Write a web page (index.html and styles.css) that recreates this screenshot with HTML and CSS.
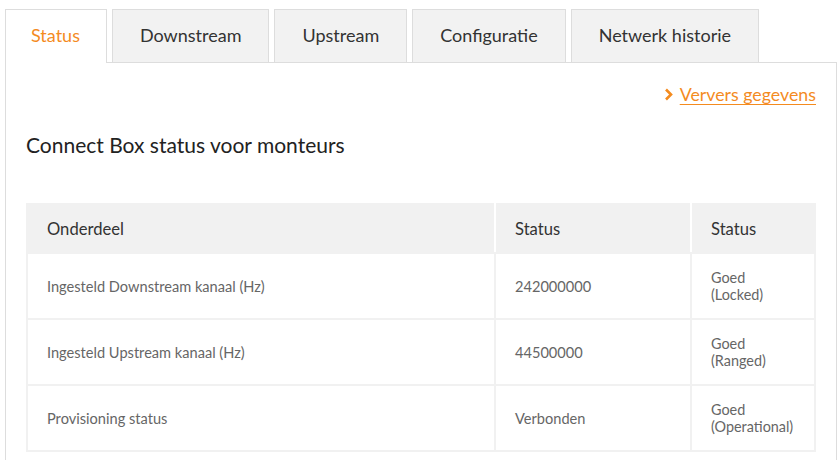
FILE: index.html
```html
<!DOCTYPE html>
<html lang="nl">
<head>
<meta charset="utf-8">
<title>Connect Box status</title>
<link rel="stylesheet" href="styles.css">
</head>
<body>
<div class="page">
  <nav class="tabs">
    <a class="tab active">Status</a>
    <a class="tab">Downstream</a>
    <a class="tab">Upstream</a>
    <a class="tab">Configuratie</a>
    <a class="tab">Netwerk historie</a>
  </nav>
  <section class="panel">
    <div class="refresh-row">
      <a class="refresh">
        <svg class="chev" width="9" height="13" viewBox="0 0 9 13"><polyline points="2,1.5 7,6.5 2,11.5" fill="none" stroke="#f48b1f" stroke-width="2.6"/></svg>
        <span class="refresh-text">Ververs gegevens</span>
      </a>
    </div>
    <h2 class="title">Connect Box status voor monteurs</h2>
    <table class="status-table">
      <thead>
        <tr><th class="c1">Onderdeel</th><th class="c2">Status</th><th class="c3">Status</th></tr>
      </thead>
      <tbody>
        <tr><td>Ingesteld Downstream kanaal (Hz)</td><td>242000000</td><td class="state"><span>Goed</span><span>(Locked)</span></td></tr>
        <tr><td>Ingesteld Upstream kanaal (Hz)</td><td>44500000</td><td class="state"><span>Goed</span><span>(Ranged)</span></td></tr>
        <tr><td>Provisioning status</td><td>Verbonden</td><td class="state"><span>Goed</span><span>(Operational)</span></td></tr>
      </tbody>
    </table>
  </section>
</div>
</body>
</html>
```
FILE: styles.css
```css
html, body { margin: 0; padding: 0; background: #fff; }
body { font-family: Lato, "Open Sans", sans-serif; color: #333; }
.page { padding: 9px 0 0 5px; }
.tabs { display: flex; gap: 5px; height: 53px; }
.tab {
  box-sizing: border-box;
  height: 53px;
  padding: 0 27px 3px;
  display: flex;
  align-items: center;
  background: #f2f2f2;
  border: 1px solid #dddddd;
  border-bottom: none;
  font-size: 18px;
  color: #333;
  cursor: pointer;
}
.tab.active {
  background: #fff;
  color: #f48b1f;
  height: 54px;
  padding: 0 26px 4px 25px;
  margin-bottom: -1px;
  position: relative;
  z-index: 1;
}
.panel {
  border: 1px solid #dddddd;
  border-bottom: none;
  padding: 0 20px;
  box-sizing: border-box;
  width: 832px;
  height: 400px;
}
.refresh-row { display: flex; justify-content: flex-end; padding-top: 20px; }
.refresh { display: flex; align-items: center; gap: 7px; color: #f48b1f; font-size: 17.8px; cursor: pointer; }
.chev { margin-left: -2px; }
.refresh-text { text-decoration: underline; text-underline-offset: 3px; }
.title { margin: 28px 0 0 0; font-size: 21px; font-weight: normal; color: #222; line-height: 24px; }
.status-table {
  margin-top: 46px;
  width: 790px;
  border-collapse: collapse;
  font-size: 14.6px;
}
.status-table th, .status-table td {
  border: 2px solid #f1f1f1;
  text-align: left;
  padding: 0 0 0 19px;
}
.status-table th {
  background: #f1f1f1;
  height: 47px;
  font-weight: normal;
  font-size: 16.6px;
  color: #333;
}
.status-table th.c1, .status-table th.c2 { border-right-color: #fff; }
.status-table th.c1 { width: 447px; }
.status-table th.c2 { width: 175px; }
.status-table td { height: 64px; color: #666; }
.state span { display: block; font-size: 14.4px; line-height: 17px; }
```
